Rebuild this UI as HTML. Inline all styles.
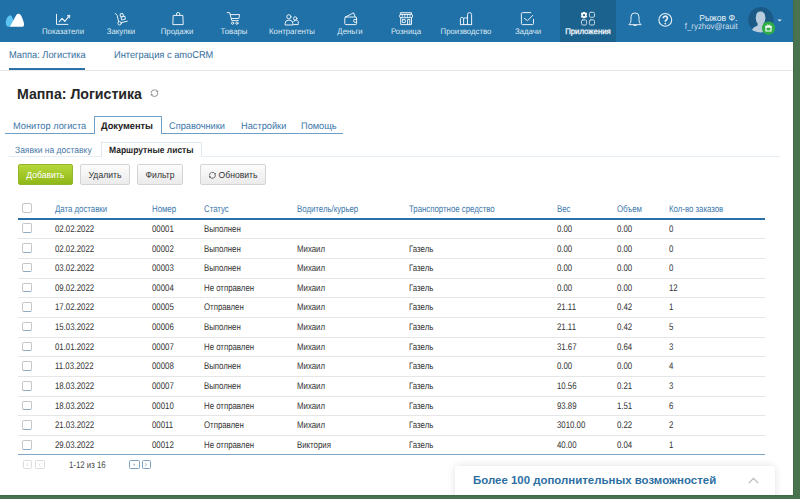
<!DOCTYPE html>
<html><head><meta charset="utf-8">
<style>
*{box-sizing:border-box;margin:0;padding:0}
html,body{width:800px;height:499px;overflow:hidden;background:#49734f;font-family:"Liberation Sans",sans-serif}
#page{position:absolute;left:0;top:0;width:793px;height:495px;background:#fff;overflow:hidden}
#shadow{position:absolute;left:0;top:0;width:794px;height:496px;background:#416a47}
.abs{position:absolute;white-space:nowrap}
#hdr{position:absolute;left:0;top:0;width:793px;height:41.5px;background:#2071a7}
.nt{position:absolute;top:26.8px;font-size:8.1px;color:#dfe9f2;line-height:9px;white-space:nowrap;text-align:center;width:80px;transform:scaleX(0.965) rotate(0.05deg);transform-origin:40px 0}
.st{position:absolute;font-size:9.9px;color:#336d9c;top:49.1px;line-height:11px;white-space:nowrap;transform:scaleX(0.94) rotate(0.05deg);transform-origin:0 0}
#title{left:17px;top:86px;font-size:14.15px;font-weight:bold;color:#262626;line-height:16px}
.tab{position:absolute;font-size:9.6px;color:#3c76a9;line-height:11px;top:120.2px;white-space:nowrap;transform:scaleX(0.963) rotate(0.05deg);transform-origin:0 0}
.subtab{position:absolute;font-size:9.1px;color:#4a7aa6;line-height:10px;top:144.5px;white-space:nowrap;transform:scaleX(0.935) rotate(0.05deg);transform-origin:0 0}
.btn{position:absolute;top:164px;height:20.5px;border:1px solid #d4d4d4;border-radius:2px;background:linear-gradient(#fcfcfc,#ebebeb);font-size:8.6px;color:#333;line-height:18px;padding-top:0.8px;text-align:center;white-space:nowrap}
.th{position:absolute;top:204px;font-size:9.6px;color:#3c78ad;line-height:10px;white-space:nowrap;transform:scaleX(0.815) rotate(0.05deg);transform-origin:0 0}
.cb{position:absolute;width:10px;height:9.5px;border:1px solid #c6c6c6;border-radius:2px;background:#fff}
.cbr{border-bottom:1px solid #8eaac4}
.rl{position:absolute;left:18px;width:747px;height:1px;background:#e6e6e6}
.c{position:absolute;font-size:9.6px;color:#333;line-height:10px;white-space:nowrap;transform:scaleX(0.815) rotate(0.05deg);transform-origin:0 0}
</style></head><body>
<div id="shadow"></div>
<div id="page">
  <div id="hdr">
    <div class="abs" style="left:560px;top:0;width:55.5px;height:41.5px;background:#1c628f"></div>
    <svg class="abs" style="left:0;top:0" width="793" height="41" viewBox="0 0 793 41" fill="none" stroke="#e8f0f7" stroke-width="1" stroke-linecap="round" stroke-linejoin="round">
      <!-- logo -->
      <path d="M9 26.8 C6.5 26.8 5.6 25 5.8 22.5 C6 19 8 15.2 10 15.2 C11.8 15.2 13 18 13.3 21 L10 26.8 Z" fill="#5bc4f1" stroke="none"/>
      <path d="M9.8 26.8 L16 15.5 C17 14 17.8 13.8 18.8 13.8 C20 13.8 21 15 22 17.5 C23.5 21 24.2 23.5 24 25 C23.8 26.5 23 26.8 22 26.8 Z" fill="#fff" stroke="none"/>
      <!-- Показатели -->
      <path d="M56.5 14.3 V24.4 H67.9"/>
      <path d="M59.3 21.6 L62.1 18.4 L64.8 21.4 L68.6 16.8" stroke-width="1.15"/>
      <path d="M67.5 15.6 L69.9 15.2 L69.6 17.6 Z" fill="#e8f0f7" stroke-width="0.8"/>
      <!-- Закупки -->
      <path d="M115.2 13.4 L117.2 15.4 L118.6 21.6"/>
      <circle cx="119.6" cy="23.3" r="1.7"/>
      <path d="M121.3 22.6 L127.3 21.2"/>
      <g transform="rotate(-14 122.8 16.5)">
        <rect x="120.6" y="13.4" width="3" height="3.2" rx="1"/>
        <rect x="120.9" y="16.6" width="3.9" height="3.1" rx="0.8"/>
      </g>
      <!-- Продажи -->
      <path d="M173.6 15.4 H182.9 L183.2 24.6 H173.2 Z"/>
      <path d="M176.5 15.4 V14.1 A1.65 1.65 0 0 1 179.8 14.1 V15.4"/>
      <!-- Товары -->
      <path d="M227.3 12.6 H229.6 L231.8 20.6 H238.3"/>
      <path d="M230.3 14.6 H239.6 L238.9 18.5 H231.4"/>
      <circle cx="232.6" cy="23.2" r="1.1"/>
      <circle cx="236.9" cy="23.2" r="1.1"/>
      <!-- Контрагенты -->
      <circle cx="288.9" cy="16.8" r="2.1"/>
      <path d="M285.1 24.6 V23.6 A3.9 3.6 0 0 1 292.9 23.6 V24.6 Z"/>
      <circle cx="295.2" cy="18.5" r="1.7"/>
      <path d="M293.6 21.6 A2.4 2.6 0 0 1 298.2 23.6 V24.6 H293.6"/>
      <!-- Деньги -->
      <rect x="344.8" y="17" width="11.8" height="7.6" rx="1"/>
      <path d="M345.4 17 L353.6 12.8 L355.2 17"/>
      <path d="M356.6 19.4 H355 A1.45 1.45 0 0 0 355 22.3 H356.6"/>
      <!-- Розница -->
      <path d="M400.7 12.7 H411.5 V14.4 H400.7 Z"/>
      <rect x="399.5" y="14.4" width="13.2" height="3.3" rx="1.6"/>
      <path d="M402.3 14.6 V17.5 M404.8 14.6 V17.5 M407.4 14.6 V17.5 M410 14.6 V17.5" stroke-width="0.8"/>
      <path d="M400.7 17.7 V24.6 H411.5 V17.7"/>
      <rect x="402.3" y="19.6" width="3" height="3" rx="0.4"/>
      <path d="M407.6 24.6 V19.5 H409.8 V24.6"/>
      <!-- Производство -->
      <path d="M460.4 24.6 H471.7"/>
      <path d="M460.4 24.6 V18.6 A1.5 1.2 0 0 1 463.6 18.8 V24.6"/>
      <path d="M463.6 19 A1.9 1.2 0 0 1 467.5 19 V24.6"/>
      <path d="M467.5 24.6 V14.6 A2.05 2 0 0 1 471.6 14.6 V24.6"/>
      <!-- Задачи -->
      <path d="M530.8 12.6 H522.4 A1 1 0 0 0 521.4 13.6 V23.6 A1 1 0 0 0 522.4 24.6 H532.5 A1 1 0 0 0 533.5 23.6 V19.3"/>
      <path d="M524.4 18.4 L527.6 20.7 L532.8 15.3"/>
      <!-- Приложения -->
      <g stroke="#c4d6e4">
        <rect x="589.4" y="12.3" width="5.1" height="5" rx="1.3"/>
        <rect x="581.5" y="19.9" width="5.1" height="5.1" rx="1.3"/>
        <rect x="589.4" y="19.9" width="5.1" height="5.1" rx="1.3"/>
      </g>
      <g transform="translate(584 15.1)" stroke="none" fill="#fff">
        <path d="M-1 -3.2 H1 L1.3 -2.3 L2.4 -2.6 L3.2 -1 L2.5 -0.3 V0.3 L3.2 1 L2.4 2.6 L1.3 2.3 L1 3.2 H-1 L-1.3 2.3 L-2.4 2.6 L-3.2 1 L-2.5 0.3 V-0.3 L-3.2 -1 L-2.4 -2.6 L-1.3 -2.3 Z M0 -1.1 A1.1 1.1 0 1 0 0.01 -1.1 Z" fill-rule="evenodd"/>
      </g>
      <!-- bell -->
      <path d="M629.2 24.4 C630.6 23 631 21.5 631 19.5 V16.8 A4 3.9 0 0 1 639 16.8 V19.5 C639 21.5 639.4 23 640.8 24.4 Z"/>
      <path d="M634 25.3 H636" stroke-width="1.2"/>
      <!-- help -->
      <circle cx="665.3" cy="19.9" r="6.4" stroke-width="1.1"/>
      <path d="M663.2 18.3 A2.1 2 0 1 1 666.3 20 C665.5 20.5 665.3 20.9 665.3 21.7" stroke-width="1.7" stroke-linecap="butt"/>
      <circle cx="665.3" cy="23.6" r="0.9" fill="#e8f0f7" stroke="none"/>
      <!-- avatar -->
      <circle cx="760.8" cy="19.7" r="12.7" fill="#1b5a87" stroke="none"/>
      <path d="M752 30 C753.5 27 755.5 26.5 757.6 25.6 V23.2 C756.5 22.3 756 21 756 19 C755.5 18.5 755.6 17.5 756 17.2 C755.8 13.8 757.5 11.6 760.6 11.6 C763.7 11.6 765.4 13.8 765.2 17.2 C765.6 17.5 765.7 18.5 765.2 19 C765.2 21 764.7 22.3 763.6 23.2 V25.6 C765.7 26.5 767.7 27 769.2 30 C767 31.4 764 32.4 760.8 32.4 C757.6 32.4 754.6 31.6 752 30 Z" fill="#b9ccdd" stroke="none"/>
      <circle cx="768.5" cy="28.2" r="6.6" fill="#2fae48" stroke="none"/>
      <path d="M765.2 25.9 H771.8 V27.7 H765.2 Z" fill="#fff" stroke="none"/>
      <path d="M766 27.6 V31 H771 V27.6" stroke="#fff" stroke-width="1.2" fill="none" stroke-linejoin="miter" stroke-linecap="butt"/>
      <path d="M766.8 25.9 C766.8 24.5 768.5 24.5 768.5 25.9 C768.5 24.5 770.2 24.5 770.2 25.9" stroke="#fff" stroke-width="0.9"/>
      <path d="M777.4 19.4 H781.8 L779.6 21.6 Z" fill="#e8f0f7" stroke="none"/>
    </svg>
    <div class="nt" style="left:23px">Показатели</div>
    <div class="nt" style="left:81px">Закупки</div>
    <div class="nt" style="left:137.3px">Продажи</div>
    <div class="nt" style="left:193.5px">Товары</div>
    <div class="nt" style="left:252px">Контрагенты</div>
    <div class="nt" style="left:310.2px">Деньги</div>
    <div class="nt" style="left:365.7px">Розница</div>
    <div class="nt" style="left:425.6px">Производство</div>
    <div class="nt" style="left:487.6px">Задачи</div>
    <div class="nt" style="left:548.1px;color:#fff;-webkit-text-stroke:0.25px #fff">Приложения</div>
    <div class="abs" style="left:640px;top:12.6px;width:97.5px;text-align:right;font-size:8.6px;line-height:10px;color:#eef4f9">Рыжов Ф.</div>
    <div class="abs" style="left:640px;top:21.3px;width:97.8px;text-align:right;font-size:8.6px;line-height:10px;color:#cfdfec;transform:scaleX(0.915) rotate(0.05deg);transform-origin:97.8px 0">f_ryzhov@rauit</div>
  </div>
  <div class="abs" style="left:0;top:69.6px;width:793px;height:1px;background:#e8e8e8"></div>
  <div class="st" style="left:8.7px">Маппа: Логистика</div>
  <div class="abs" style="left:9px;top:68.3px;width:76px;height:2px;background:#2a72a8"></div>
  <div class="st" style="left:113.5px">Интеграция с amoCRM</div>
  <div id="title" class="abs">Маппа: Логистика</div>
  <svg class="abs" style="left:146px;top:86px" width="16" height="16" viewBox="0 0 16 16" fill="none" stroke="#a6a6a6" stroke-width="1.1"><path d="M5.21 7.39 A3.3 3.3 0 0 1 11.49 5.71"/><path d="M11.79 6.81 A3.3 3.3 0 0 1 5.51 8.49"/><path d="M11.97 6.74 L12.35 4.47 L9.99 5.57 Z M5.03 7.46 L4.65 9.73 L7.01 8.63 Z" fill="#8c8c8c" stroke="none"/></svg>
  <!-- main tabs -->
  <div class="abs" style="left:5px;top:132.5px;width:338px;height:1px;background:#6d9fc9"></div>
  <div class="abs" style="left:93.5px;top:116.3px;width:68.3px;height:17.5px;background:#fff;border:1px solid #6d9fc9;border-bottom:none"></div>
  <div class="tab" style="left:13px">Монитор логиста</div>
  <div class="tab" style="left:101.3px;color:#222;font-weight:bold">Документы</div>
  <div class="tab" style="left:169px">Справочники</div>
  <div class="tab" style="left:240.5px">Настройки</div>
  <div class="tab" style="left:300.5px">Помощь</div>
  <!-- sub tabs -->
  <div class="abs" style="left:8px;top:156px;width:772px;height:1px;background:#e6eef4"></div>
  <div class="abs" style="left:101.4px;top:141.5px;width:100.6px;height:15.5px;background:#fff;border:1px solid #dfe8f0;border-bottom:none"></div>
  <div class="subtab" style="left:14.6px">Заявки на доставку</div>
  <div class="subtab" style="left:109.2px;color:#1e1e1e;font-weight:bold">Маршрутные листы</div>
  <!-- buttons -->
  <div class="btn" style="left:17.5px;width:55.6px;background:linear-gradient(#b6d83c,#8fb716);border-color:#93b52a;color:#fff">Добавить</div>
  <div class="btn" style="left:80.2px;width:49.6px">Удалить</div>
  <div class="btn" style="left:137px;width:46px">Фильтр</div>
  <div class="btn" style="left:200.4px;width:65.3px;padding-left:10px">Обновить</div>
  <svg class="abs" style="left:204px;top:166px" width="16" height="16" viewBox="0 0 16 16" fill="none" stroke="#6e6e6e" stroke-width="1.0"><path d="M5.41 9.56 A3.0 3.0 0 0 1 11.12 8.03"/><path d="M11.39 9.04 A3.0 3.0 0 0 1 5.68 10.57"/><path d="M11.56 8.97 L11.90 6.91 L9.76 7.91 Z M5.24 9.63 L4.90 11.69 L7.04 10.69 Z" fill="#555" stroke="none"/></svg>

<div class="th" style="left:55.2px">Дата доставки</div>
<div class="th" style="left:152.4px">Номер</div>
<div class="th" style="left:203.6px">Статус</div>
<div class="th" style="left:296.8px">Водитель/курьер</div>
<div class="th" style="left:408.5px">Транспортное средство</div>
<div class="th" style="left:557px">Вес</div>
<div class="th" style="left:616.6px">Объем</div>
<div class="th" style="left:668.5px">Кол-во заказов</div>
<div class="cb" style="left:22px;top:203px"></div>
<div class="abs" style="left:18px;top:217.5px;width:747px;height:2px;background:#2a6fa6"></div>
<div class="cb cbr" style="left:22px;top:223.40px"></div>
<div class="c" style="left:55.2px;top:223.90px">02.02.2022</div>
<div class="c" style="left:152.4px;top:223.90px">00001</div>
<div class="c" style="left:203.6px;top:223.90px">Выполнен</div>
<div class="c" style="left:557px;top:223.90px">0.00</div>
<div class="c" style="left:616.6px;top:223.90px">0.00</div>
<div class="c" style="left:668.5px;top:223.90px">0</div>
<div class="rl" style="top:238.10px"></div>
<div class="cb cbr" style="left:22px;top:243.10px"></div>
<div class="c" style="left:55.2px;top:243.54px">02.02.2022</div>
<div class="c" style="left:152.4px;top:243.54px">00002</div>
<div class="c" style="left:203.6px;top:243.54px">Выполнен</div>
<div class="c" style="left:296.8px;top:243.54px">Михаил</div>
<div class="c" style="left:408.5px;top:243.54px">Газель</div>
<div class="c" style="left:557px;top:243.54px">0.00</div>
<div class="c" style="left:616.6px;top:243.54px">0.00</div>
<div class="c" style="left:668.5px;top:243.54px">0</div>
<div class="rl" style="top:257.80px"></div>
<div class="cb cbr" style="left:22px;top:262.80px"></div>
<div class="c" style="left:55.2px;top:263.18px">03.02.2022</div>
<div class="c" style="left:152.4px;top:263.18px">00003</div>
<div class="c" style="left:203.6px;top:263.18px">Выполнен</div>
<div class="c" style="left:296.8px;top:263.18px">Михаил</div>
<div class="c" style="left:408.5px;top:263.18px">Газель</div>
<div class="c" style="left:557px;top:263.18px">0.00</div>
<div class="c" style="left:616.6px;top:263.18px">0.00</div>
<div class="c" style="left:668.5px;top:263.18px">0</div>
<div class="rl" style="top:277.50px"></div>
<div class="cb cbr" style="left:22px;top:282.50px"></div>
<div class="c" style="left:55.2px;top:282.82px">09.02.2022</div>
<div class="c" style="left:152.4px;top:282.82px">00004</div>
<div class="c" style="left:203.6px;top:282.82px">Не отправлен</div>
<div class="c" style="left:296.8px;top:282.82px">Михаил</div>
<div class="c" style="left:408.5px;top:282.82px">Газель</div>
<div class="c" style="left:557px;top:282.82px">0.00</div>
<div class="c" style="left:616.6px;top:282.82px">0.00</div>
<div class="c" style="left:668.5px;top:282.82px">12</div>
<div class="rl" style="top:297.20px"></div>
<div class="cb cbr" style="left:22px;top:302.20px"></div>
<div class="c" style="left:55.2px;top:302.46px">17.02.2022</div>
<div class="c" style="left:152.4px;top:302.46px">00005</div>
<div class="c" style="left:203.6px;top:302.46px">Отправлен</div>
<div class="c" style="left:296.8px;top:302.46px">Михаил</div>
<div class="c" style="left:408.5px;top:302.46px">Газель</div>
<div class="c" style="left:557px;top:302.46px">21.11</div>
<div class="c" style="left:616.6px;top:302.46px">0.42</div>
<div class="c" style="left:668.5px;top:302.46px">1</div>
<div class="rl" style="top:316.90px"></div>
<div class="cb cbr" style="left:22px;top:321.90px"></div>
<div class="c" style="left:55.2px;top:322.10px">15.03.2022</div>
<div class="c" style="left:152.4px;top:322.10px">00006</div>
<div class="c" style="left:203.6px;top:322.10px">Выполнен</div>
<div class="c" style="left:296.8px;top:322.10px">Михаил</div>
<div class="c" style="left:408.5px;top:322.10px">Газель</div>
<div class="c" style="left:557px;top:322.10px">21.11</div>
<div class="c" style="left:616.6px;top:322.10px">0.42</div>
<div class="c" style="left:668.5px;top:322.10px">5</div>
<div class="rl" style="top:336.60px"></div>
<div class="cb cbr" style="left:22px;top:341.60px"></div>
<div class="c" style="left:55.2px;top:341.74px">01.01.2022</div>
<div class="c" style="left:152.4px;top:341.74px">00007</div>
<div class="c" style="left:203.6px;top:341.74px">Не отправлен</div>
<div class="c" style="left:296.8px;top:341.74px">Михаил</div>
<div class="c" style="left:408.5px;top:341.74px">Газель</div>
<div class="c" style="left:557px;top:341.74px">31.67</div>
<div class="c" style="left:616.6px;top:341.74px">0.64</div>
<div class="c" style="left:668.5px;top:341.74px">3</div>
<div class="rl" style="top:356.30px"></div>
<div class="cb cbr" style="left:22px;top:361.30px"></div>
<div class="c" style="left:55.2px;top:361.38px">11.03.2022</div>
<div class="c" style="left:152.4px;top:361.38px">00008</div>
<div class="c" style="left:203.6px;top:361.38px">Выполнен</div>
<div class="c" style="left:296.8px;top:361.38px">Михаил</div>
<div class="c" style="left:408.5px;top:361.38px">Газель</div>
<div class="c" style="left:557px;top:361.38px">0.00</div>
<div class="c" style="left:616.6px;top:361.38px">0.00</div>
<div class="c" style="left:668.5px;top:361.38px">4</div>
<div class="rl" style="top:376.00px"></div>
<div class="cb cbr" style="left:22px;top:381.00px"></div>
<div class="c" style="left:55.2px;top:381.02px">18.03.2022</div>
<div class="c" style="left:152.4px;top:381.02px">00007</div>
<div class="c" style="left:203.6px;top:381.02px">Выполнен</div>
<div class="c" style="left:296.8px;top:381.02px">Михаил</div>
<div class="c" style="left:408.5px;top:381.02px">Газель</div>
<div class="c" style="left:557px;top:381.02px">10.56</div>
<div class="c" style="left:616.6px;top:381.02px">0.21</div>
<div class="c" style="left:668.5px;top:381.02px">3</div>
<div class="rl" style="top:395.70px"></div>
<div class="cb cbr" style="left:22px;top:400.70px"></div>
<div class="c" style="left:55.2px;top:400.66px">18.03.2022</div>
<div class="c" style="left:152.4px;top:400.66px">00010</div>
<div class="c" style="left:203.6px;top:400.66px">Не отправлен</div>
<div class="c" style="left:296.8px;top:400.66px">Михаил</div>
<div class="c" style="left:408.5px;top:400.66px">Газель</div>
<div class="c" style="left:557px;top:400.66px">93.89</div>
<div class="c" style="left:616.6px;top:400.66px">1.51</div>
<div class="c" style="left:668.5px;top:400.66px">6</div>
<div class="rl" style="top:415.40px"></div>
<div class="cb cbr" style="left:22px;top:420.40px"></div>
<div class="c" style="left:55.2px;top:420.30px">21.03.2022</div>
<div class="c" style="left:152.4px;top:420.30px">00011</div>
<div class="c" style="left:203.6px;top:420.30px">Отправлен</div>
<div class="c" style="left:296.8px;top:420.30px">Михаил</div>
<div class="c" style="left:408.5px;top:420.30px">Газель</div>
<div class="c" style="left:557px;top:420.30px">3010.00</div>
<div class="c" style="left:616.6px;top:420.30px">0.22</div>
<div class="c" style="left:668.5px;top:420.30px">2</div>
<div class="rl" style="top:435.10px"></div>
<div class="cb cbr" style="left:22px;top:440.10px"></div>
<div class="c" style="left:55.2px;top:439.94px">29.03.2022</div>
<div class="c" style="left:152.4px;top:439.94px">00012</div>
<div class="c" style="left:203.6px;top:439.94px">Не отправлен</div>
<div class="c" style="left:296.8px;top:439.94px">Виктория</div>
<div class="c" style="left:408.5px;top:439.94px">Газель</div>
<div class="c" style="left:557px;top:439.94px">40.00</div>
<div class="c" style="left:616.6px;top:439.94px">0.04</div>
<div class="c" style="left:668.5px;top:439.94px">1</div>
<div class="abs" style="left:18px;top:454px;width:747px;height:1px;background:#7fa6c6"></div>
  <!-- pager -->
  <div class="abs" style="left:23.2px;top:460.2px;width:8.5px;height:9px;border:1px solid #dcdcdc;border-radius:1.5px"></div>
  <div class="abs" style="left:35px;top:460.2px;width:9.5px;height:9px;border:1px solid #dcdcdc;border-radius:1.5px"></div>
  <div class="c" style="left:69px;top:459.8px;color:#4a4a4a">1-12 из 16</div>
  <div class="abs" style="left:129.1px;top:460.2px;width:10.5px;height:9px;border:1px solid #7ea3c4;border-radius:1.5px"></div>
  <div class="abs" style="left:141.8px;top:460.2px;width:9.4px;height:9px;border:1px solid #7ea3c4;border-radius:1.5px"></div>
  <svg class="abs" style="left:0;top:455px" width="160" height="20" viewBox="0 455 160 20" fill="none">
    <path d="M28 463.4 L26.6 464.7 L28 466" stroke="#d6d6d6" stroke-width="0.8"/>
    <path d="M40.4 463.4 L39 464.7 L40.4 466" stroke="#d6d6d6" stroke-width="0.8"/>
    <path d="M133.6 463.3 L135.2 464.7 L133.6 466.1 Z" fill="#7ea3c4"/>
    <path d="M145.2 463.4 L146.6 464.7 L145.2 466" stroke="#7ea3c4" stroke-width="0.8"/>
  </svg>
  <!-- promo -->
  <div class="abs" style="left:455px;top:465.5px;width:320px;height:40px;background:#fff;border-radius:3px;box-shadow:0 0 8px rgba(0,0,0,0.12)"></div>
  <div class="abs" style="left:473px;top:474.1px;font-size:11.45px;font-weight:bold;color:#2e6fa3;line-height:12px">Более 100 дополнительных возможностей</div>
  <svg class="abs" style="left:746px;top:476px" width="14" height="9" viewBox="0 0 14 9" fill="none" stroke="#b5b5b5" stroke-width="1.1">
    <path d="M2.8 7.2 L7.5 2.4 L12.2 7.2"/>
  </svg>
</div>
</body></html>
